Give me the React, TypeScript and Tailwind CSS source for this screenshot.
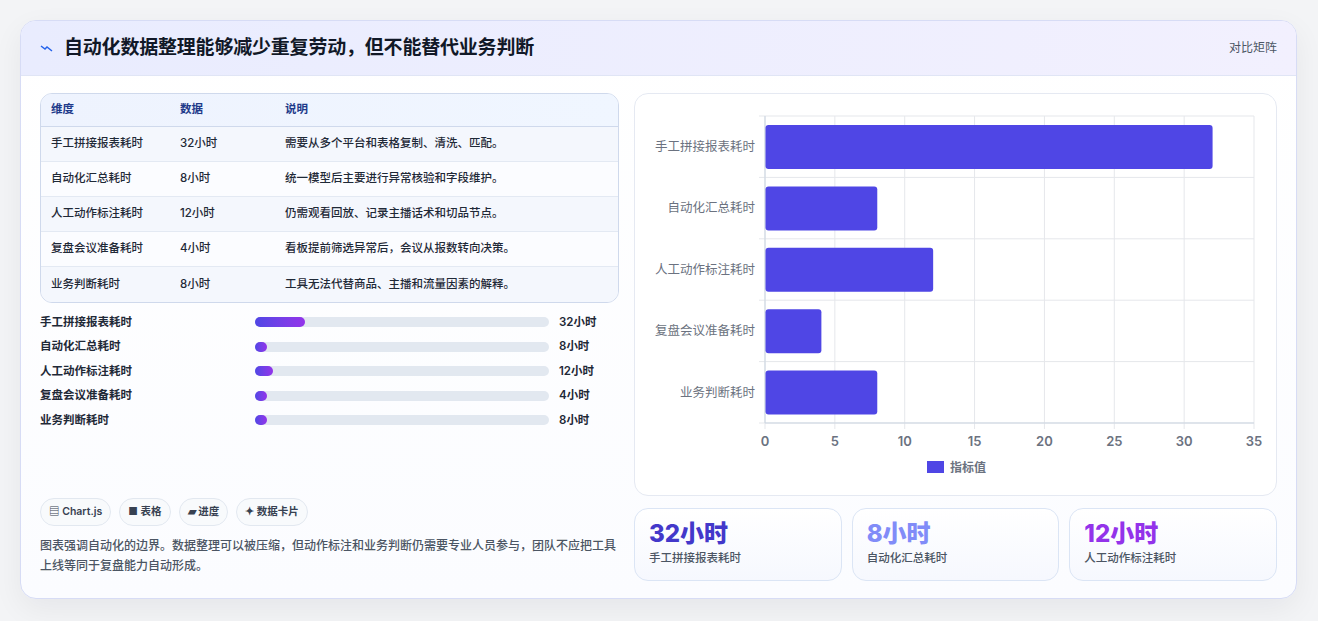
import React from 'react'

const rows = [
  { name: '手工拼接报表耗时', value: 32, desc: '需要从多个平台和表格复制、清洗、匹配。' },
  { name: '自动化汇总耗时', value: 8, desc: '统一模型后主要进行异常核验和字段维护。' },
  { name: '人工动作标注耗时', value: 12, desc: '仍需观看回放、记录主播话术和切品节点。' },
  { name: '复盘会议准备耗时', value: 4, desc: '看板提前筛选异常后，会议从报数转向决策。' },
  { name: '业务判断耗时', value: 8, desc: '工具无法代替商品、主播和流量因素的解释。' },
]

const progressWidth: Record<number, number> = { 32: 50, 8: 12, 12: 18, 4: 12 }

function Chart() {
  const x0 = 130
  const x1 = 619
  const y0 = 22
  const band = 61.4
  const unit = (x1 - x0) / 35
  return (
    <svg width="642" height="402" className="block">
      {[0, 5, 10, 15, 20, 25, 30, 35].map((t) => (
        <g key={t}>
          <line x1={x0 + t * unit} x2={x0 + t * unit} y1={y0} y2={y0 + band * 5 + 6} stroke="#e5e7eb" />
          <text x={x0 + t * unit} y={352} textAnchor="middle" fontSize="13" fill="#6b7280" fontWeight="600">
            {t}
          </text>
        </g>
      ))}
      {[0, 1, 2, 3, 4, 5].map((i) => (
        <line key={i} x1={x0 - 6} x2={x1} y1={y0 + i * band} y2={y0 + i * band} stroke="#e5e7eb" />
      ))}
      <line x1={x0} x2={x1} y1={y0 + band * 5} y2={y0 + band * 5} stroke="#cbd5e1" />
      <line x1={x0} x2={x0} y1={y0} y2={y0 + band * 5} stroke="#cbd5e1" />
      {rows.map((r, i) => (
        <g key={r.name}>
          <rect x={x0 + 0.5} y={y0 + i * band + 9} width={r.value * unit} height={44} rx={3} fill="#4f46e5" />
          <text x={x0 - 10} y={y0 + i * band + 35} textAnchor="end" fontSize="12.5" fill="#6b7280">
            {r.name}
          </text>
        </g>
      ))}
      <rect x={292} y={367} width={17} height={12} fill="#4f46e5" />
      <text x={315} y={378} fontSize="12" fill="#6b7280" fontWeight="600">指标值</text>
    </svg>
  )
}

export default function App() {
  return (
    <div className="min-h-[621px] w-[1318px] bg-[#f3f4f6] pt-[20px] pl-[20px]" style={{ fontFamily: 'Inter, "Noto Sans CJK SC", sans-serif' }}>
      <div className="w-[1277px] h-[579px] rounded-[16px] border border-[#d7dcf5] bg-gradient-to-b from-white to-[#fbfcff] shadow-[0_10px_30px_rgba(15,23,42,0.06)] overflow-hidden">
        <div className="h-[55px] flex items-center justify-between px-[19px] bg-gradient-to-r from-[#e9ecfe] to-[#f2f0fe] border-b border-[#e0e5f5]">
          <div className="flex items-center gap-[10px]">
            <svg width="14" height="10" viewBox="0 0 14 10">
              <path d="M1 3 L5 6 L7 4 L12 8" stroke="#2563eb" strokeWidth="1.5" fill="none" />
            </svg>
            <h1 className="text-[19px] font-bold text-[#111827] tracking-[-0.2px]">自动化数据整理能够减少重复劳动，但不能替代业务判断</h1>
          </div>
          <span className="text-[12px] text-[#4b5563]">对比矩阵</span>
        </div>
        <div className="flex gap-[15px] px-[19px] pt-[17px]">
          <div className="w-[582px] flex flex-col">
            <div className="rounded-[12px] border border-[#cfd9ec] overflow-hidden bg-[#f8faff]">
              <div className="flex h-[33px] items-center bg-gradient-to-r from-[#eef3fe] to-[#f0f6ff] border-b border-[#cfd9ec] text-[11.5px] font-semibold text-[#1e3a8a]">
                <div className="w-[139px] pl-[10px]">维度</div>
                <div className="w-[105px]">数据</div>
                <div>说明</div>
              </div>
              {rows.map((r, i) => (
                <div key={r.name} className={`flex h-[35px] items-center text-[11.5px] font-medium text-[#1f2937] ${i < 4 ? 'border-b border-[#e3e9f3]' : ''} ${i % 2 ? 'bg-[#fbfcff]' : 'bg-[#f4f7fd]'}`}>
                  <div className="w-[139px] pl-[10px]">{r.name}</div>
                  <div className="w-[105px]">{r.value}小时</div>
                  <div>{r.desc}</div>
                </div>
              ))}
            </div>
            <div className="mt-[12px] flex flex-col gap-[10px] h-[183px]">
              {rows.map((r) => (
                <div key={r.name} className="flex items-center h-[14.5px] text-[11.5px] font-semibold text-[#1f2937]">
                  <div className="w-[215px]">{r.name}</div>
                  <div className="w-[294px] h-[10px] rounded-full bg-[#e2e8f0]">
                    <div className="h-full rounded-full bg-gradient-to-r from-[#4f46e5] to-[#9333ea]" style={{ width: progressWidth[r.value] }} />
                  </div>
                  <div className="ml-[10px]">{r.value}小时</div>
                </div>
              ))}
            </div>
            <div className="flex gap-[8px]">
              {['▤ Chart.js', '■ 表格', '▰ 进度', '✦ 数据卡片'].map((c) => (
                <span key={c} className="h-[28px] px-[8px] flex items-center rounded-full border border-[#e2e8f0] bg-[#f8fafc] text-[10.5px] font-semibold text-[#374151]">{c}</span>
              ))}
            </div>
            <p className="mt-[10px] text-[12px] leading-[20px] font-medium text-[#4b5563]">
              图表强调自动化的边界。数据整理可以被压缩，但动作标注和业务判断仍需要专业人员参与，团队不应把工具上线等同于复盘能力自动形成。
            </p>
          </div>
          <div className="w-[643px] flex flex-col gap-[12px]">
            <div className="h-[403px] rounded-[14px] border border-[#e5e9f2] bg-white overflow-hidden">
              <Chart />
            </div>
            <div className="grid grid-cols-3 gap-[10px]">
              {[
                { v: '32小时', l: '手工拼接报表耗时', c: 'text-[#4338ca]' },
                { v: '8小时', l: '自动化汇总耗时', c: 'text-[#818cf8]' },
                { v: '12小时', l: '人工动作标注耗时', c: 'text-[#9333ea]' },
              ].map((s) => (
                <div key={s.l} className="h-[73px] rounded-[14px] border border-[#dbe5f5] bg-gradient-to-b from-white to-[#f6f8fe] px-[14px] pt-[9px]">
                  <div className={`text-[24px] leading-[32px] font-extrabold ${s.c}`}>{s.v}</div>
                  <div className="text-[11.5px] font-medium text-[#4b5563]">{s.l}</div>
                </div>
              ))}
            </div>
          </div>
        </div>
      </div>
    </div>
  )
}
